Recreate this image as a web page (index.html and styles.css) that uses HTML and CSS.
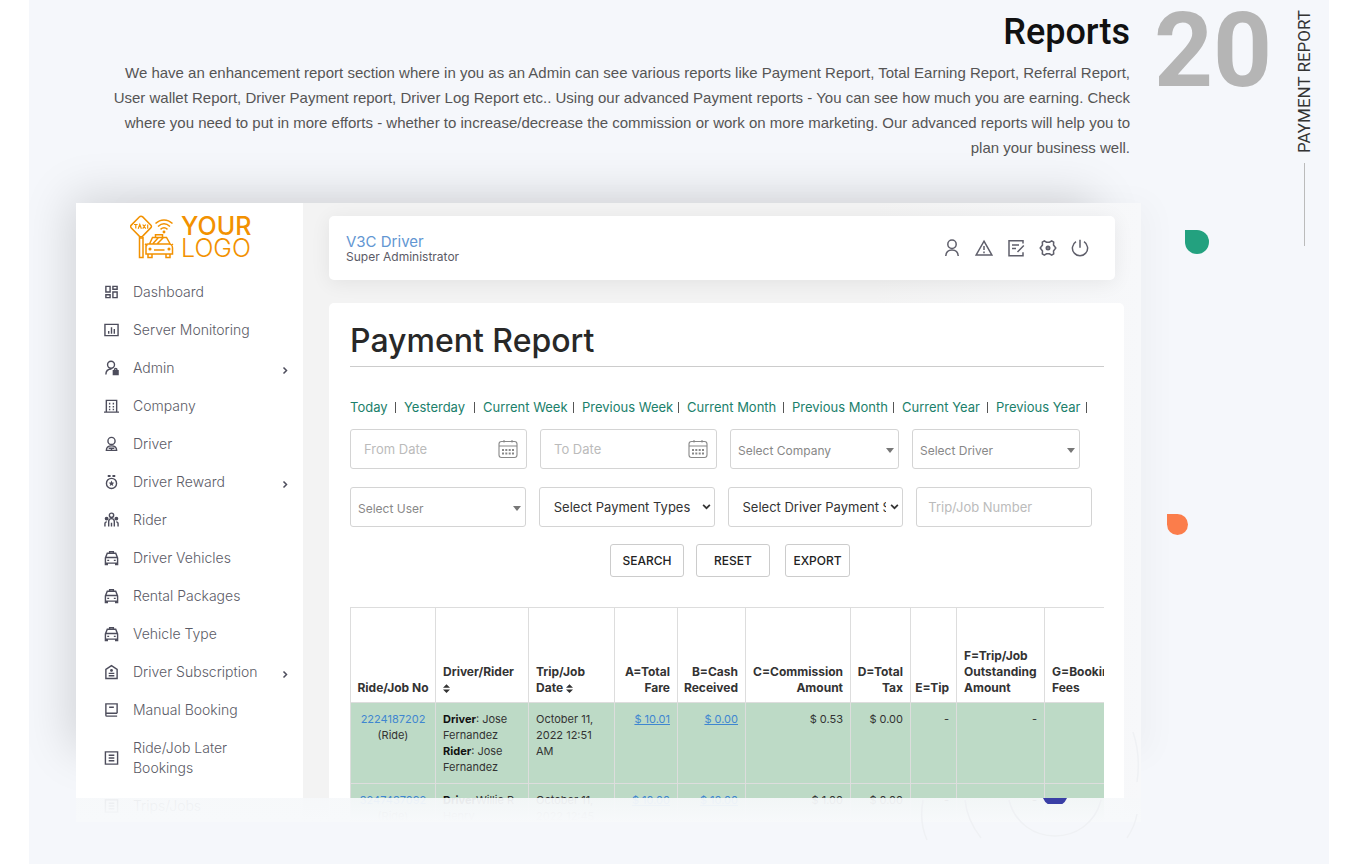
FILE: index.html
```html
<!DOCTYPE html>
<html lang="en">
<head>
<meta charset="utf-8">
<meta name="viewport" content="width=device-width, initial-scale=1">
<title>Payment Report</title>
<link rel="stylesheet" href="styles.css">
</head>
<body>
<svg class="sprite" aria-hidden="true">
  <symbol id="i-dash" viewBox="0 0 16 16"><path d="M2 2h4.5v6H2zM9.500 2H14v3H9.500zM2 11h4.500v3H2zM9.500 8H14v6H9.500z"/></symbol>
  <symbol id="i-chart" viewBox="0 0 16 16"><path d="M1 2h14v12H1zM5 9v3M8 5v7M11 7v5"/></symbol>
  <symbol id="i-admin" viewBox="0 0 16 16"><circle cx="7.500" cy="4.500" r="3.700"/><path d="M2 15c0-4 2.500-6 6-6"/><path d="M10 11h5v4h-5z" fill="currentColor"/><path d="M11.200 11V9.800a1.300 1.300 0 0 1 2.600 0V11"/></symbol>
  <symbol id="i-company" viewBox="0 0 16 16"><path d="M2.500 14.500V2h11v12.500M0 14.500h16M6 4.500v2M10 4.500v2M6 8v1.500M10 8v1.500M6 11v1.500M10 11v1.500"/></symbol>
  <symbol id="i-driver" viewBox="0 0 16 16"><circle cx="8" cy="4.700" r="3.800"/><path d="M2.500 14.800c0-3 2-4.800 5.500-4.800s5.500 1.800 5.500 4.800zM5 12.500h6M8 12.500v2"/></symbol>
  <symbol id="i-reward" viewBox="0 0 16 16"><circle cx="8" cy="9.500" r="5.400"/><path d="M4 1.500h3M9 1.500h3" stroke-width="2.200"/><path d="M8 6.500l.9 2 2.100.2-1.600 1.400.5 2.100L8 11.100l-1.900 1.100.5-2.100L5 8.700l2.100-.2z" fill="currentColor" stroke="none"/></symbol>
  <symbol id="i-rider" viewBox="0 0 16 16"><circle cx="8" cy="3" r="2.300"/><circle cx="2.800" cy="6.500" r="1.300" fill="currentColor"/><circle cx="13.200" cy="6.500" r="1.300" fill="currentColor"/><path d="M5 15V9.500a3 3 0 0 1 6 0V15M8 11v4M1 15v-3c0-1.500.8-2 2-2M15 15v-3c0-1.500-.8-2-2-2"/></symbol>
  <symbol id="i-car" viewBox="0 0 16 16"><path d="M1.500 8v5.500h13V8L12.500 3h-9zM2 7.500h12M6 2.700V1.200h4v1.500M1.500 13v2h2v-1.500M14.500 13v2h-2v-1.500M3.500 10.500h2M10.500 10.500h2"/></symbol>
  <symbol id="i-sub" viewBox="0 0 16 16"><path d="M2 5.200L8 1.200l6 4V15H2zM5 9.500h6M5 12h6"/><circle cx="8" cy="6.300" r=".8" fill="currentColor"/></symbol>
  <symbol id="i-book" viewBox="0 0 16 16"><path d="M14 11.500V1.500H2v12c0 .8.500 1 1 1h11M2 11.500h12M5.500 5h5"/></symbol>
  <symbol id="i-list" viewBox="0 0 16 16"><path d="M1.500 1.500h13v13h-13zM5 5h6M5 8h6M5 11h6"/></symbol>
  <symbol id="i-chev" viewBox="0 0 8 8"><path d="M2.500 1l3 3-3 3"/></symbol>
  <symbol id="i-cal" viewBox="0 0 20 20"><rect x="1" y="2.500" width="18" height="16" rx="2.500"/><path d="M1 7h18M6 1v2.500M14 1v2.500"/><path d="M4 11h2M7.300 11h2M10.700 11h2M14 11h2M4 14.500h2M7.300 14.500h2M10.700 14.500h2M14 14.500h2" stroke-width="1.800"/></symbol>
</svg>

<section class="feature">
  <div class="content">
    <header class="intro">
      <h2 class="intro-title">Reports</h2>
      <p class="intro-text">We have an enhancement report section where in you as an Admin can see various reports like Payment Report, Total Earning Report, Referral Report,<br>User wallet Report, Driver Payment report, Driver Log Report etc.. Using our advanced Payment reports - You can see how much you are earning. Check<br>where you need to put in more efforts - whether to increase/decrease the commission or work on more marketing. Our advanced reports will help you to<br>plan your business well.</p>
    </header>

    <div class="preview">
      <aside class="sidebar">
        <a class="logo" href="#">
          <svg class="logo-mark" viewBox="0 0 44 44" aria-hidden="true">
            <path d="M11 1.200q1 0 1.700.7l8 8.200q1.400 1.400 0 2.800l-8 8.200q-1.700 1.400-3.400 0l-8-8.200q-1.400-1.400 0-2.800l8-8.200q.7-.7 1.700-.7z"/>
            <path d="M4 9.500h3.600M5.800 9.500v4M8.200 13.700l1.600-4.200 1.600 4.200M12.700 9.500l3 4.200M15.700 9.500l-3 4.200M17.700 9.500v4.200" stroke-width="1.200"/>
            <path d="M9.500 23h3.500v19.500H9.500zM9.500 23v-1.500M13 22v1"/>
            <path d="M25.500 8.500c5-4.800 12-4.800 17 0M28 11.500c4-3.600 8-3.600 12 0M30.500 14.300c2.400-2 4.600-2 7 0"/><circle cx="34" cy="17" r=".7" fill="currentColor"/>
            <path d="M16 31c0-1 1-2 2-2h21c2 0 3.500 2 3.500 4v6H16zM19.500 29l3-6.500h14l4 7M25.500 22.500v-2.700h7v2.700M23 28.500l5.500-6M27.500 28.500l6-6M18 39v3.500h4V39M36 39v3.500h4V39M24 35h10.500M15 29l2.500 1.500M43 29l-2 1.500"/>
            <circle cx="20" cy="34" r=".8"/><circle cx="39" cy="34" r=".8"/>
          </svg>
          <span class="logo-text"><b>YOUR</b><span>LOGO</span></span>
        </a>
        <nav class="menu" aria-label="Main">
          <a href="#"><svg><use href="#i-dash"/></svg><span>Dashboard</span></a>
          <a href="#"><svg><use href="#i-chart"/></svg><span>Server Monitoring</span></a>
          <a href="#"><svg><use href="#i-admin"/></svg><span>Admin</span><svg class="chev"><use href="#i-chev"/></svg></a>
          <a href="#"><svg><use href="#i-company"/></svg><span>Company</span></a>
          <a href="#"><svg><use href="#i-driver"/></svg><span>Driver</span></a>
          <a href="#"><svg><use href="#i-reward"/></svg><span>Driver Reward</span><svg class="chev"><use href="#i-chev"/></svg></a>
          <a href="#"><svg><use href="#i-rider"/></svg><span>Rider</span></a>
          <a href="#"><svg><use href="#i-car"/></svg><span>Driver Vehicles</span></a>
          <a href="#"><svg><use href="#i-car"/></svg><span>Rental Packages</span></a>
          <a href="#"><svg><use href="#i-car"/></svg><span>Vehicle Type</span></a>
          <a href="#"><svg><use href="#i-sub"/></svg><span>Driver Subscription</span><svg class="chev"><use href="#i-chev"/></svg></a>
          <a href="#"><svg><use href="#i-book"/></svg><span>Manual Booking</span></a>
          <a href="#"><svg><use href="#i-list"/></svg><span>Ride/Job Later<br>Bookings</span></a>
          <a href="#"><svg><use href="#i-list"/></svg><span>Trips/Jobs</span></a>
        </nav>
      </aside>

      <div class="main">
        <div class="topbar">
          <div class="user"><a class="user-name" href="#">V3C Driver</a><span class="user-role">Super Administrator</span></div>
          <div class="actions">
            <button type="button" aria-label="Profile"><svg viewBox="0 0 18 18"><circle cx="9" cy="5.200" r="4.200"/><path d="M2.800 17c.2-4 2.400-6 6.200-6s6 2 6.200 6"/></svg></button>
            <button type="button" aria-label="Alerts"><svg viewBox="0 0 18 18"><path d="M9 2.200L16.800 16H1.200zM9 7v4M9 12.500v1.700"/></svg></button>
            <button type="button" aria-label="Notes"><svg viewBox="0 0 18 18"><path d="M16 4.500V1.700H2v15h14v-3.500M5 6h7M5 9.500h4M10.500 13l6.300-6.500"/></svg></button>
            <button type="button" aria-label="Settings"><svg viewBox="0 0 18 18"><path d="M5.300 1.800l2.200 1.400h3l2.200-1.400 2 1.400-.2 2.800L16.800 9l-2.300 3 .2 2.800-2 1.400-2.200-1.400h-3l-2.200 1.400-2-1.400.2-2.800L1.200 9l2.300-3-.2-2.800z"/><circle cx="9" cy="9" r="1.500" stroke-width="2"/></svg></button>
            <button type="button" aria-label="Log out"><svg viewBox="0 0 18 18"><path d="M5 2.700a7.600 7.600 0 1 0 8 0M9 .8v8"/></svg></button>
          </div>
        </div>

        <div class="card">
          <h1 class="card-title">Payment Report</h1>
          <ul class="ranges">
            <li><a href="#">Today</a></li>
            <li><a href="#">Yesterday</a></li>
            <li><a href="#">Current Week</a></li>
            <li><a href="#">Previous Week</a></li>
            <li><a href="#">Current Month</a></li>
            <li><a href="#">Previous Month</a></li>
            <li><a href="#">Current Year</a></li>
            <li><a href="#">Previous Year</a></li>
          </ul>
          <form class="filters">
            <div class="row row-dates">
              <label class="field"><input type="text" placeholder="From Date" aria-label="From Date"><svg class="cal"><use href="#i-cal"/></svg></label>
              <label class="field"><input type="text" placeholder="To Date" aria-label="To Date"><svg class="cal"><use href="#i-cal"/></svg></label>
              <label class="field search"><select aria-label="Company"><option>Select Company</option></select></label>
              <label class="field search"><select aria-label="Driver"><option>Select Driver</option></select></label>
            </div>
            <div class="row row-types">
              <label class="field search"><select aria-label="User"><option>Select User</option></select></label>
              <label class="field plain"><select aria-label="Payment type"><option>Select Payment Types</option></select><svg class="down"><use href="#i-chev"/></svg></label>
              <label class="field plain"><select aria-label="Driver payment status"><option>Select Driver Payment Status</option></select><svg class="down"><use href="#i-chev"/></svg></label>
              <label class="field trip"><input type="text" placeholder="Trip/Job Number" aria-label="Trip/Job Number"></label>
            </div>
            <div class="buttons">
              <button type="button">SEARCH</button>
              <button type="button">RESET</button>
              <button type="button" class="export">EXPORT</button>
            </div>
          </form>
          <div class="table-wrap">
            <table class="report">
              <colgroup><col class="c-no"><col class="c-driver"><col class="c-date"><col class="c-fare"><col class="c-cash"><col class="c-com"><col class="c-tax"><col class="c-tip"><col class="c-out"><col class="c-fees"></colgroup>
              <thead>
                <tr>
                  <th class="mid">Ride/Job No</th>
                  <th>Driver/Rider<br><svg class="sort" viewBox="0 0 8 10"><path d="M4 0l4 4H0zM4 10l4-4H0z"/></svg></th>
                  <th>Trip/Job<br>Date <svg class="sort" viewBox="0 0 8 10"><path d="M4 0l4 4H0zM4 10l4-4H0z"/></svg></th>
                  <th class="num">A=Total Fare</th>
                  <th class="num">B=Cash Received</th>
                  <th class="num">C=Commission Amount</th>
                  <th class="num">D=Total Tax</th>
                  <th class="num">E=Tip</th>
                  <th>F=Trip/Job Outstanding Amount</th>
                  <th>G=Booking Fees</th>
                </tr>
              </thead>
              <tbody>
                <tr>
                  <td class="mid"><a href="#">2224187202</a><br>(Ride)</td>
                  <td><b>Driver</b>: Jose<br>Fernandez<br><b>Rider</b>: Jose<br>Fernandez</td>
                  <td>October 11,<br>2022 12:51<br>AM</td>
                  <td class="num"><a class="amount" href="#">$ 10.01</a></td>
                  <td class="num"><a class="amount" href="#">$ 0.00</a></td>
                  <td class="num">$ 0.53</td>
                  <td class="num">$ 0.00</td>
                  <td class="num">-</td>
                  <td class="num">-</td>
                  <td></td>
                </tr>
                <tr>
                  <td class="mid"><a href="#">3247437092</a><br>(Ride)</td>
                  <td><b>Driver</b>Willie R<br>Henry</td>
                  <td>October 11,<br>2022 12:45</td>
                  <td class="num"><a class="amount" href="#">$ 10.00</a></td>
                  <td class="num"><a class="amount" href="#">$ 10.00</a></td>
                  <td class="num">$ 1.00</td>
                  <td class="num">$ 0.00</td>
                  <td class="num">-</td>
                  <td class="num">-</td>
                  <td></td>
                </tr>
              </tbody>
            </table>
          </div>
        </div>
      </div>
      <div class="fade"><svg class="orb" viewBox="0 0 24 6" aria-hidden="true"><path d="M0 0h24a13 13 0 0 1-24 0z"/></svg></div>
    </div>
    <svg class="rings" viewBox="0 0 230 110" aria-hidden="true"><path d="M12 68q-4 22 4 40M54 68q2 20 16 38M98 68c12 48 80 48 92 0M222 0q8 24 4 50M216 106q8-12 10-24"/></svg>
  </div>

  <div class="number">20</div>
  <div class="side"><span class="side-label">PAYMENT REPORT</span></div>
  <i class="drop drop-green"></i>
  <i class="drop drop-orange"></i>
</section>
</body>
</html>
```

FILE: styles.css
```css
* { box-sizing: border-box; }

body {
  margin: 0;
  padding: 0 30px 0 29px;
  background: #fff;
  font-family: Inter, "Liberation Sans", sans-serif;
  color: #333;
}

.sprite { position: absolute; width: 0; height: 0; }
svg { fill: none; stroke: currentColor; stroke-width: 1.5; }
a { color: inherit; text-decoration: none; }
h1, h2, p, ul { margin: 0; padding: 0; }
button, input, select { font: inherit; color: inherit; }

.feature {
  position: relative;
  display: grid;
  grid-template-columns: minmax(0, 1fr) 116px 23px;
  column-gap: 16px;
  align-items: start;
  min-height: 100vh;
  padding: 0 17px 0 47px;
  background: #f5f7fb;
  overflow: hidden;
}

.content { position: relative; }

/* Intro */
.intro {
  padding: 11px 11px 43px 0;
  text-align: right;
  font-family: Roboto, "Open Sans", sans-serif;
}
.intro-title {
  margin-bottom: 7px;
  font-size: 36px;
  line-height: 42px;
  font-weight: 500;
  color: #111;
}
.intro-text {
  font-family: "Liberation Sans", sans-serif;
  font-size: 15px;
  line-height: 25px;
  color: #555;
  white-space: nowrap;
}

/* Preview window */
.preview {
  position: relative;
  display: flex;
  max-height: 619px;
  overflow: hidden;
  background: linear-gradient(90deg, #f3f3f3 75%, #f7f8fa);
}
.content::before {
  content: "";
  position: absolute;
  inset: 203px 40px 66px 0;
  box-shadow: -6px -6px 44px rgba(0, 0, 0, .15), 50px 0 30px rgba(0, 0, 0, .03);
}

.sidebar { flex: 0 0 227px; background: #fff; }
.logo {
  display: flex;
  gap: 7px;
  height: 70px;
  padding: 12px 0 0 54px;
  color: #f29100;
}
.logo-mark { width: 44px; height: 44px; stroke-width: 1.5; }
.logo-text {
  display: flex;
  flex-direction: column;
  font-size: 25px;
  line-height: 22px;
}
.logo-text b { font-weight: 500; }
.logo-text span { font-weight: 300; }

.menu a {
  display: flex;
  align-items: center;
  gap: 14px;
  min-height: 38px;
  padding: 9px 14px 9px 28px;
  font-size: 14px;
  line-height: 20px;
  font-weight: 300;
  color: #5b5b66;
}
.menu svg { flex: none; width: 15px; height: 16px; color: #4d4d5c; }
.menu .chev { width: 8px; height: 9px; margin: 4px 0 0 auto; }

.main { flex: 1; min-width: 0; padding: 13px 17px 0 26px; }

.topbar {
  display: flex;
  align-items: center;
  justify-content: space-between;
  height: 64px;
  margin-right: 9px;
  padding: 0 26px 0 17px;
  border-radius: 5px;
  background: #fff;
  box-shadow: 0 3px 20px rgba(0, 0, 0, .07);
}
.user { display: flex; flex-direction: column; }
.user-name { font-size: 15px; line-height: 17px; color: #6296d2; }
.user-role { font-size: 12px; line-height: 14px; color: #5b5b66; }
.actions { display: flex; gap: 14px; }
.actions button {
  display: grid;
  width: 18px;
  height: 18px;
  padding: 0;
  border: 0;
  background: none;
  color: #5f5f6b;
}
.actions svg { width: 18px; height: 18px; }

.card {
  margin-top: 23px;
  padding: 20px 20px 24px 21px;
  border-radius: 5px;
  background: #fff;
}
.card-title {
  padding-bottom: 7px;
  border-bottom: 1px solid #ccc;
  font-size: 32px;
  line-height: 36px;
  font-weight: 500;
  color: #282828;
}
.ranges {
  display: grid;
  grid-template-columns: 54px 79px 99px 105px 105px 110px 94px 99px;
  margin-top: 30px;
  list-style: none;
  font-size: 13px;
  line-height: 20px;
  color: #1b806b;
  white-space: nowrap;
}
.ranges li { display: flex; align-items: center; justify-content: space-between; padding-right: 8px; }
.ranges li::after { content: ""; width: 1px; height: 11px; background: #555; }

/* Filters */
.filters { margin-top: 12px; }
.row { display: grid; gap: 13px; }
.row-dates { grid-template-columns: 177fr 177fr 169fr 168fr; margin-right: 24px; }
.row-types { grid-template-columns: repeat(4, 1fr); margin: 18px 12px 0 0; }
.field { position: relative; display: block; min-width: 0; }
.field input,
.field select {
  display: block;
  width: 100%;
  height: 40px;
  padding: 0 13px;
  border: 1px solid #d4d4d4;
  border-radius: 3px;
  background: #fff;
  font-size: 13px;
  appearance: none;
}
.field input::placeholder { color: #bbb; opacity: 1; }
.field.trip input { padding: 0 11px; }
.cal { position: absolute; right: 9px; top: 10px; width: 20px; height: 20px; color: #888; stroke-width: 1.100; }
.field.search select { padding: 2px 24px 0 7px; font-size: 12px; color: #888; }
.field.search::after {
  content: "";
  position: absolute;
  right: 5px;
  top: 19px;
  border: 4px solid transparent;
  border-top: 5px solid #777;
  border-bottom: 0;
}
.field.plain select { padding: 0 16px 0 14px; }
.down { position: absolute; right: 4px; top: 15px; width: 9px; height: 9px; transform: rotate(90deg); }

.buttons { display: flex; justify-content: center; gap: 12px; margin: 17px 0 0; padding-left: 6px; }
.buttons button {
  width: 74px;
  height: 33px;
  padding: 0;
  border: 1px solid #ccc;
  border-radius: 3px;
  background: #fff;
  font-size: 12px;
  font-weight: 500;
  color: #222;
}
.buttons .export { width: 65px; margin-left: 3px; }

/* Report table */
.table-wrap { margin-top: 30px; overflow: hidden; }
.report {
  width: 784px;
  border-collapse: collapse;
  table-layout: fixed;
  font-size: 11px;
  line-height: 16px;
}
.c-no { width: 85px; }
.c-driver { width: 93px; }
.c-date { width: 86px; }
.c-fare { width: 63px; }
.c-cash { width: 68px; }
.c-com { width: 105px; }
.c-tax { width: 60px; }
.c-tip { width: 46px; }
.c-out { width: 88px; }
.c-fees { width: 90px; }
.report th,
.report td { padding: 8px 7px; border: 1px solid #ddd; text-align: left; vertical-align: top; }
.report th { height: 95px; padding: 8px 4px 6px 7px; vertical-align: bottom; font-size: 12px; font-weight: 700; color: #333; }
.report td { background: #bddac6; }
.report .num { padding-left: 4px; padding-right: 7px; text-align: right; }
.report .mid { padding-left: 0; padding-right: 0; text-align: center; }
.report td b { color: #111; }
.report td a { color: #3f86d0; }
.report .amount { text-decoration: underline; }
.sort { width: 7px; height: 9px; fill: currentColor; stroke: none; vertical-align: -1px; }

.fade {
  position: absolute;
  inset: auto 0 0 0;
  height: 24px;
  background: linear-gradient(rgba(246, 248, 250, .93), #f7f9fb);
}
.orb { position: absolute; right: 74px; top: 0; width: 24px; height: 6px; fill: #3a3fa6; stroke: none; }
.rings { position: absolute; right: 0; bottom: -20px; width: 230px; height: 110px; color: #eff1f4; }

/* Section number and vertical label */
.number {
  padding-top: 9px;
  margin-left: -3px;
  font: 700 103px/84px Roboto, "Open Sans", sans-serif;
  color: #b5b5b5;
}
.side {
  display: flex;
  flex-direction: column;
  align-items: center;
  justify-self: end;
  gap: 10px;
  padding-top: 10px;
}
.side::after { content: ""; width: 1px; height: 83px; background: #bbb; }
.side-label {
  writing-mode: vertical-rl;
  transform: rotate(180deg);
  font: 400 17px/16px Roboto, "Open Sans", sans-serif;
  color: #333;
  white-space: nowrap;
}

.drop { position: absolute; border-radius: 0 50% 50% 50%; }
.drop-green { right: 120px; top: 230px; width: 24px; height: 24px; background: #23a17f; }
.drop-orange { right: 141px; top: 514px; width: 21px; height: 21px; background: #fb7d4b; }
```
